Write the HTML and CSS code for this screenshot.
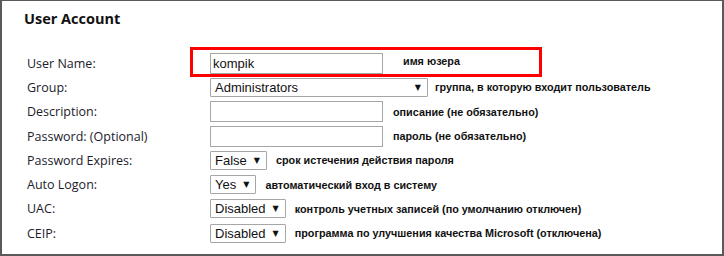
FILE: index.html
```html
<!DOCTYPE html>
<html>
<head>
<meta charset="utf-8">
<link rel="stylesheet" href="styles.css">
</head>
<body>
<div class="panel">
  <h1 class="title">User Account</h1>
  <div class="form">
    <div class="label">User Name:</div>
    <div class="cell"><span class="input">kompik</span><span class="note note-wide">имя юзера</span></div>

    <div class="label">Group:</div>
    <div class="cell"><span class="select select-group"><span class="val">Administrators</span><span class="arrow">▼</span></span><span class="note note-tight">группа, в которую входит пользователь</span></div>

    <div class="label">Description:</div>
    <div class="cell"><span class="input"></span><span class="note">описание (не обязательно)</span></div>

    <div class="label">Password: (Optional)</div>
    <div class="cell"><span class="input"></span><span class="note">пароль (не обязательно)</span></div>

    <div class="label">Password Expires:</div>
    <div class="cell"><span class="select"><span class="val">False</span><span class="arrow">▼</span></span><span class="note">срок истечения действия пароля</span></div>

    <div class="label">Auto Logon:</div>
    <div class="cell"><span class="select"><span class="val">Yes</span><span class="arrow">▼</span></span><span class="note">автоматический вход в систему</span></div>

    <div class="label">UAC:</div>
    <div class="cell"><span class="select"><span class="val">Disabled</span><span class="arrow">▼</span></span><span class="note">контроль учетных записей (по умолчанию отключен)</span></div>

    <div class="label">CEIP:</div>
    <div class="cell"><span class="select"><span class="val">Disabled</span><span class="arrow">▼</span></span><span class="note">программа по улучшения качества Microsoft (отключена)</span></div>
  </div>
  <div class="highlight"></div>
</div>
</body>
</html>
```

FILE: styles.css
```css
html, body {
  margin: 0;
  padding: 0;
  background: #fff;
}
.panel {
  position: relative;
  box-sizing: border-box;
  width: 724px;
  height: 256px;
  border: 2px solid #5a5a5a;
  border-top-width: 1px;
  background: #fff;
}
.title {
  margin: 0;
  padding: 8px 0 0 22px;
  height: 42px;
  box-sizing: border-box;
  font-family: "Open Sans", "Noto Sans", sans-serif;
  font-weight: 700;
  font-size: 14.5px;
  line-height: 20px;
  color: #111;
}
.form {
  display: grid;
  grid-template-columns: 183px auto;
  grid-auto-rows: 24.3px;
  align-items: center;
  padding-left: 25px;
  margin-top: 8px;
}
.label {
  font-family: "Open Sans", "Noto Sans", sans-serif;
  font-size: 12.5px;
  color: #1c1c2c;
  white-space: nowrap;
}
.cell {
  display: flex;
  align-items: center;
}
.input {
  box-sizing: border-box;
  display: inline-block;
  width: 173px;
  height: 21px;
  border: 1px solid #a6a6a6;
  padding: 0 2px;
  font-family: "Liberation Sans", Arial, sans-serif;
  font-size: 13px;
  line-height: 19px;
  color: #111;
}
.select {
  box-sizing: border-box;
  display: inline-flex;
  align-items: center;
  height: 19px;
  border: 1px solid #a6a6a6;
  border-radius: 1px;
  padding: 0 6px 0 4px;
  font-family: "Liberation Sans", Arial, sans-serif;
  font-size: 13px;
  line-height: 17px;
  color: #111;
}
.select + .note {
  margin-left: 9px;
}
.select-group {
  width: 218px;
  justify-content: space-between;
}
.arrow {
  font-family: "DejaVu Sans", sans-serif;
  font-size: 8px;
  margin-left: 7px;
  color: #111;
}
.note {
  margin-left: 10px;
  font-family: "Liberation Sans", Arial, sans-serif;
  font-weight: 700;
  font-size: 10.8px;
  color: #111;
  white-space: nowrap;
}
.note-wide {
  margin-left: 20px;
  margin-top: -5px;
}
.select + .note-tight {
  margin-left: 7px;
}
.highlight {
  position: absolute;
  left: 188px;
  top: 46px;
  width: 352px;
  height: 30px;
  box-sizing: border-box;
  border: 3px solid #f00;
}
```
